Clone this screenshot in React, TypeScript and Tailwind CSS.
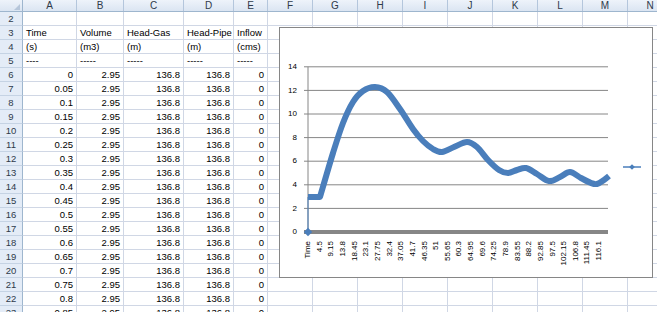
import React from 'react';

const COLS = [
  { k: 'A', w: 'w-[54px]' },
  { k: 'B', w: 'w-[47px]' },
  { k: 'C', w: 'w-[60px]' },
  { k: 'D', w: 'w-[50px]' },
  { k: 'E', w: 'w-[34px]' },
  { k: 'F', w: 'w-[45px]' },
  { k: 'G', w: 'w-[45px]' },
  { k: 'H', w: 'w-[45px]' },
  { k: 'I', w: 'w-[45px]' },
  { k: 'J', w: 'w-[45px]' },
  { k: 'K', w: 'w-[45px]' },
  { k: 'L', w: 'w-[45px]' },
  { k: 'M', w: 'w-[45px]' },
  { k: 'N', w: 'w-[45px]' },
];

type Cell = { t: string; right?: boolean };

const textRows: Record<number, string[]> = {
  3: ['Time', 'Volume', 'Head-Gas', 'Head-Pipe', 'Inflow'],
  4: ['(s)', '(m3)', '(m)', '(m)', '(cms)'],
  5: ['----', '-----', '-----', '-----', '-----'],
};

const rowCells = (r: number): Cell[] => {
  if (textRows[r]) return textRows[r].map((t) => ({ t }));
  if (r < 6) return [];
  const time = Number(((r - 6) * 0.05).toFixed(2)).toString();
  return [time, '2.95', '136.8', '136.8', '0'].map((t) => ({ t, right: true }));
};

const rows = Array.from({ length: 22 }, (_, i) => i + 2);

// chart points in page coordinates (after the flat start)
const curve: [number, number][] = [
  [320, 197], [333, 153], [343, 123], [353, 102], [363, 91],
  [375, 87], [387, 92], [400, 109], [413, 129], [423, 141], [433, 149], [442, 152],
  [454, 147], [467, 142], [477, 147], [488, 160], [499, 170], [508, 173], [517, 170],
  [526, 168], [537, 174], [549, 181], [560, 177], [570, 172], [581, 178], [591, 183],
  [597, 184], [604, 180], [609, 176],
];

const smooth = (pts: [number, number][]) => {
  let d = `M308,197 L${pts[0][0]},${pts[0][1]}`;
  for (let i = 0; i < pts.length - 1; i++) {
    const p0 = pts[i - 1] || pts[i];
    const p1 = pts[i];
    const p2 = pts[i + 1];
    const p3 = pts[i + 2] || p2;
    const c1 = [p1[0] + (p2[0] - p0[0]) / 6, p1[1] + (p2[1] - p0[1]) / 6];
    const c2 = [p2[0] - (p3[0] - p1[0]) / 6, p2[1] - (p3[1] - p1[1]) / 6];
    d += ` C${c1[0]},${c1[1]} ${c2[0]},${c2[1]} ${p2[0]},${p2[1]}`;
  }
  return d;
};

const xLabels = [
  'Time', '4.5', '9.15', '13.8', '18.45', '23.1', '27.75', '32.4', '37.05', '41.7',
  '46.35', '51', '55.65', '60.3', '64.95', '69.6', '74.25', '78.9', '83.55', '88.2',
  '92.85', '97.5', '102.15', '106.8', '111.45', '116.1',
];

const Chart = () => {
  const y0 = 232;
  const step = 23.6;
  return (
    <div className="absolute left-[279px] top-[27px] w-[374px] h-[251px] bg-white border border-[#868686]">
      <svg width="372" height="249" viewBox="280 28 372 249" className="block font-['Liberation_Sans',Arial,sans-serif]">
        {[1, 2, 3, 4, 5, 6, 7].map((k) => (
          <line key={k} x1="304" x2="608" y1={y0 - k * step} y2={y0 - k * step} stroke="#868686" strokeWidth="1" />
        ))}
        <line x1="308" x2="308" y1={y0 - 7 * step} y2={y0} stroke="#868686" strokeWidth="1" />
        <line x1="304" x2="608" y1={y0} y2={y0} stroke="#868686" strokeWidth="4" />
        {[0, 1, 2, 3, 4, 5, 6, 7].map((k) => (
          <text key={k} x="297" y={y0 - k * step} fontSize="8" textAnchor="end" dominantBaseline="middle" fill="#000">
            {k * 2}
          </text>
        ))}
        {xLabels.map((l, i) => {
          const x = 308 + i * 11.64;
          return (
            <text
              key={l}
              x={x}
              y={241}
              fontSize="8"
              textAnchor="end"
              dominantBaseline="middle"
              transform={`rotate(-90 ${x} 241)`}
              fill="#000"
            >
              {l}
            </text>
          );
        })}
        <line x1="308" x2="308" y1={y0} y2="197" stroke="#4a7ebb" strokeWidth="1" />
        <path d={smooth(curve)} fill="none" stroke="#4a7ebb" strokeWidth="6" strokeLinejoin="round" strokeLinecap="butt" />
        <rect x="305" y={y0 - 3} width="6" height="6" fill="#4a7ebb" transform={`rotate(45 308 ${y0})`} />
        <line x1="623" x2="641" y1="167" y2="167" stroke="#4a7ebb" strokeWidth="1.5" />
        <rect x="630" y="165" width="4" height="4" fill="#4a7ebb" transform="rotate(45 632 167)" />
      </svg>
    </div>
  );
};

const App = () => {
  return (
    <div className="relative w-[657px] h-[312px] overflow-hidden bg-white font-['Liberation_Sans',Arial,sans-serif] text-[9.5px] text-black">
      <div className="flex h-[12px] bg-gradient-to-b from-[#eef3fa] to-[#dbe5f2] border-b border-[#9eb6ce]">
        <div className="w-[23px] shrink-0 border-r border-[#9eb6ce] flex items-end justify-end pr-[2px] pb-[1px]">
          <svg width="6" height="6" viewBox="0 0 6 6">
            <path d="M6 0 L6 6 L0 6 Z" fill="#b6c6da" />
          </svg>
        </div>
        {COLS.map((c) => (
          <div
            key={c.k}
            className={`${c.w} shrink-0 border-r border-[#b4c6dc] flex items-center justify-center text-[10px] leading-[10px] text-[#2e3a4a]`}
          >
            {c.k}
          </div>
        ))}
      </div>
      {rows.map((r) => {
        const cells = rowCells(r);
        return (
          <div key={r} className="flex h-[14px]">
            <div className="w-[23px] shrink-0 bg-[#e4ecf7] border-r border-b border-r-[#9eb6ce] border-b-[#c5d3e4] flex items-center justify-center text-[#2e3a4a] leading-[13px]">
              {r}
            </div>
            {COLS.map((c, i) => {
              const cell = cells[i];
              return (
                <div
                  key={c.k}
                  className={`${c.w} shrink-0 border-r border-b border-[#d0d7e5] flex items-center whitespace-nowrap leading-[13px] ${
                    cell && cell.right ? 'justify-end pr-[3px]' : 'justify-start pl-[3px]'
                  }`}
                >
                  {cell ? cell.t : ''}
                </div>
              );
            })}
          </div>
        );
      })}
      <Chart />
    </div>
  );
};

export default App;
